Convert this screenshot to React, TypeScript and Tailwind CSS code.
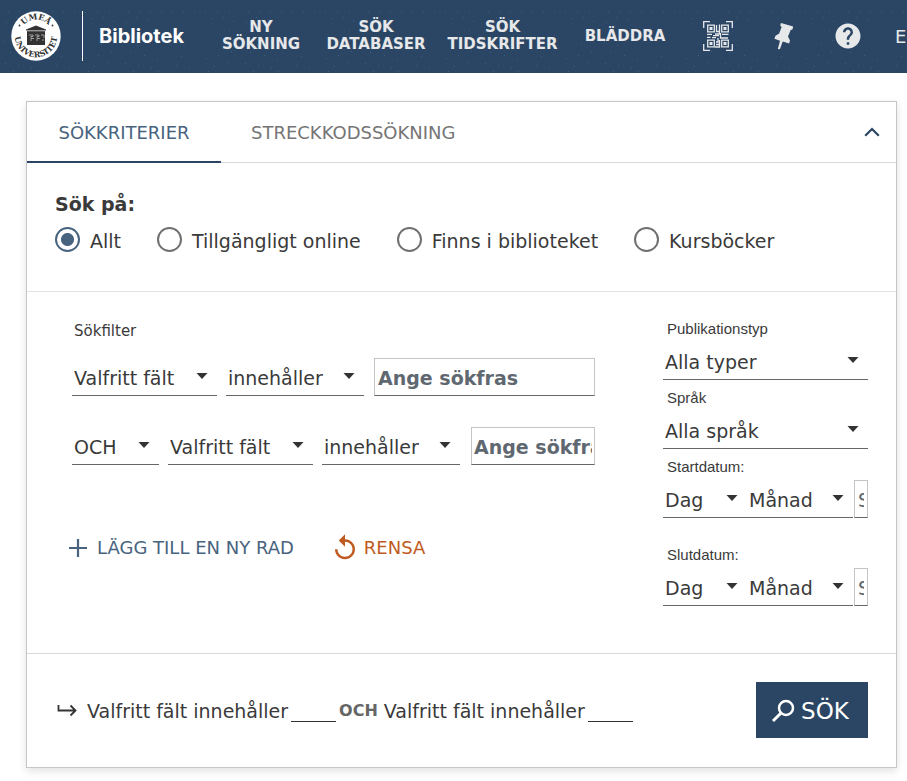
import type { ReactNode } from "react";
import { MdHelp, MdReplay } from "react-icons/md";

const dots: [number, number][] = [
  [8, 12], [19, 11], [30, 11], [41, 12], [52, 11], [63, 12], [74, 11], [85, 12], [97, 11], [109, 12],
  [6, 22], [16, 17], [28, 19], [91, 18], [103, 17], [113, 21],
  [12, 31], [109, 30], [4, 41], [17, 45], [101, 44], [112, 40],
  [10, 52], [24, 55], [37, 59], [61, 56], [86, 58], [98, 55], [111, 51],
  [5, 63], [18, 65], [31, 68], [56, 65], [69, 68], [94, 66], [107, 62],
  [13, 71], [38, 71], [88, 71],
];

function DotTexture({ id }: { id: string }) {
  return (
    <svg className="pointer-events-none absolute inset-0 h-full w-full" aria-hidden="true">
      <defs>
        <pattern id={id} width="120" height="74" patternUnits="userSpaceOnUse">
          {dots.map(([x, y]) => (
            <rect key={`${x}-${y}`} x={x} y={y} width="1" height="1" fill="#3b5e80" />
          ))}
        </pattern>
      </defs>
      <rect width="100%" height="100%" fill={`url(#${id})`} />
    </svg>
  );
}

function Seal() {
  return (
    <svg viewBox="0 0 50 50" className="size-[50px] shrink-0" role="img" aria-label="Umeå universitet">
      <circle cx="25" cy="25" r="24.7" fill="#fff" />
      <defs>
        <path id="seal-top" d="M8.5 25a16.5 16.5 0 0 1 33 0" />
        <path id="seal-bottom" d="M5.1 17.8a21.2 21.2 0 1 0 39.8 0" />
      </defs>
      <g fill="#333" className="font-['DejaVu_Serif',serif] text-[8px] font-bold">
        <text textAnchor="middle">
          <textPath href="#seal-top" startOffset="50%">UMEÅ</textPath>
        </text>
        <text textAnchor="middle">
          <textPath href="#seal-bottom" startOffset="50%">UNIVERSITET</textPath>
        </text>
      </g>
      <circle cx="8.500" cy="14.500" r="0.9" fill="#333" />
      <circle cx="41.500" cy="14.500" r="0.9" fill="#333" />
      <path d="M15 19.500v-1l10-4 10 4v1z" fill="#333" />
      <path d="M16 20.200h18V34H16z" fill="#333" />
      <path
        d="M18 24h4v1.500h-2v2h3M24 24h4v1.500h-2v2h3M30 24h3v3M19 29h2M25 29h2M31 29h2"
        fill="none"
        stroke="#bbb"
        strokeWidth="0.8"
      />
    </svg>
  );
}

function QrIcon() {
  return (
    <svg viewBox="0 0 30 30" className="size-[30px]" fill="none" stroke="currentColor" strokeWidth="1.300" aria-hidden="true">
      <path d="M.7 7V.7H7M23 .7h6.300V7M29.300 23v6.300H23M7 29.300H.7V23" />
      <path d="M4.700 4.200h6.600v6.600H4.700zM18.700 4.200h6.600v6.600h-6.600zM4.700 19.200h6.600v6.600H4.700zM18.700 19.200h6.600v6.600h-6.600z" />
      <path d="M6.500 6h3v3h-3zM20.500 6h3v3h-3zM6.500 21h3v3h-3zM20.500 21h3v3h-3z" fill="currentColor" stroke="none" />
      <path d="M13.500 4v6.500h3V3.500M16.500 8v5H12M4 13.400h5M10 14.600h6M19 13.400h6.500M4 16.300h3.500M9 16.600h4M17.500 12v5H25M15 17v4h-2M16.500 19v7H12M13 23.500h3" />
    </svg>
  );
}

function PinIcon() {
  return (
    <svg viewBox="0 0 22 28" className="h-7 w-[22px]" fill="currentColor" aria-hidden="true">
      <path d="M8 .9 20.200 4.600 19.400 7.400 17.700 7.900 15 14.500 17 18.600 16.100 21.400 9.700 19.500 6.900 27.300 4.800 26.900 7 18.700 1.400 16.800 2.500 13.700 6.200 11.600 8.600 5 7.200 3.500z" />
    </svg>
  );
}

function Select({ label, id, value, className }: { label?: string; id?: string; value: string; className: string }) {
  return (
    <div className={`relative h-[38px] shrink-0 ${className}`}>
      <select
        id={id}
        aria-label={label}
        className="h-full w-full appearance-none rounded-none border-b border-[#666] bg-transparent pt-[3px] pr-6 pl-0.5 text-[19px] text-[#3a3a3a]"
      >
        <option>{value}</option>
      </select>
      <svg viewBox="0 0 12 6" className="pointer-events-none absolute top-[15px] right-[9px] h-[6px] w-3" aria-hidden="true">
        <path d="M.5 0h11L6 6z" fill="#333" />
      </svg>
    </div>
  );
}

const inputStyle =
  "h-[38px] min-w-0 flex-1 rounded-none border border-[#c4c4c4] border-b-[#666] pt-0.5 text-[19px] placeholder:text-[#5f6870] placeholder:opacity-100";

function Field({ label, id, children }: { label: string; id: string; children: ReactNode }) {
  return (
    <div className="flex flex-col gap-[3px]">
      <label htmlFor={id} className="pl-1 font-['Liberation_Sans',Arial,sans-serif] text-[15px] leading-5">
        {label}
      </label>
      {children}
    </div>
  );
}

function DateField({ label, id, year }: { label: string; id: string; year: string }) {
  return (
    <Field label={label} id={id}>
      <div className="flex">
        <Select id={id} value="Dag" className="w-[84px]" />
        <Select label={`${label} månad`} value="Månad" className="w-[106px]" />
        <input aria-label={`${label} år`} placeholder={year} className={`${inputStyle} ml-px px-[3px]`} />
      </div>
    </Field>
  );
}

function Clause() {
  return (
    <>
      <span className="pt-0.5">Valfritt fält innehåller</span>
      <span className="mr-[3px] ml-[3px] h-6 w-[45px] border-b border-[#333]" />
    </>
  );
}

const links = [
  { text: "Ny sökning", width: "w-[112px]" },
  { text: "Sök databaser", width: "w-[118px]" },
  { text: "Sök tidskrifter", width: "w-[135px]" },
  { text: "Bläddra", width: "w-[110px]" },
];

const scopes = ["Allt", "Tillgängligt online", "Finns i biblioteket", "Kursböcker"];

export default function App() {
  return (
    <div className="overflow-x-hidden bg-white font-['DejaVu_Sans',Verdana,sans-serif] text-[19px] text-[#3a3a3a]">
      <header className="relative h-[73px] overflow-hidden bg-[#2b4664] text-[#e6e8ea]">
        <DotTexture id="header-dots" />
        <div className="relative flex h-[72px] items-center pl-[11px]">
          <Seal />
          <a
            href="#"
            className="ml-[21px] flex h-[50px] w-[123px] shrink-0 items-center border-l border-white pl-4 font-[Inter,sans-serif] text-[20px] font-bold text-white"
          >
            Bibliotek
          </a>
          <nav className="flex shrink-0 items-center">
            {links.map((link) => (
              <a
                key={link.text}
                href="#"
                className={`${link.width} px-1 text-center text-[15px] leading-[17px] font-bold uppercase`}
              >
                {link.text.split(" ").map((word) => (
                  <span key={word} className="block">
                    {word}
                  </span>
                ))}
              </a>
            ))}
          </nav>
          <div className="ml-[23px] flex shrink-0 items-center">
            <button aria-label="Skanna QR-kod">
              <QrIcon />
            </button>
            <button aria-label="Mina favoriter" className="ml-10">
              <PinIcon />
            </button>
            <button aria-label="Hjälp" className="ml-[38px]">
              <MdHelp className="size-[30px]" />
            </button>
            <button aria-label="Språkval" className="ml-8 text-[18px]">
              E
            </button>
          </div>
        </div>
      </header>

      <main className="pt-7 pr-[10px] pb-3 pl-[26px]">
        <form
          className="border border-[#c6c6c6] shadow-[0_3px_8px_rgba(0,0,0,0.12)]"
          onSubmit={(event) => event.preventDefault()}
        >
          <div className="flex h-[61px] border-b border-[#d8d8d8] text-[18px]">
            <button type="button" className="-mb-px w-[194px] border-b-2 border-[#2b4664] pt-0.5 text-[#48637e]">
              SÖKKRITERIER
            </button>
            <button type="button" className="px-[30px] text-[#757575]">
              STRECKKODSSÖKNING
            </button>
            <button type="button" aria-label="Dölj sökformulär" className="mr-4 ml-auto">
              <svg viewBox="0 0 16 10" className="h-[10px] w-4" fill="none" stroke="#2b4664" strokeWidth="2.200" aria-hidden="true">
                <path d="M1.200 8.700 8 2l6.800 6.700" />
              </svg>
            </button>
          </div>

          <fieldset className="border-b border-[#e2e2e2] px-7 pt-[27px] pb-9">
            <legend className="float-left w-full leading-7 font-bold">Sök på:</legend>
            <div className="clear-both flex items-center gap-9 pt-1.5 leading-7">
              {scopes.map((scope, index) => (
                <label key={scope} className="flex items-center gap-[10px] whitespace-nowrap">
                  <input
                    type="radio"
                    name="scope"
                    defaultChecked={index === 0}
                    className="size-[25px] shrink-0 appearance-none rounded-full border-2 border-[#707070] checked:border-[#48637e] checked:bg-[radial-gradient(circle,#48637e_6px,transparent_7px)]"
                  />
                  <span className="pt-[3px]">{scope}</span>
                </label>
              ))}
            </div>
          </fieldset>

          <div className="flex border-b border-[#d8d8d8] pt-[27px] pr-7 pb-[47px] pl-[45px]">
            <div className="mr-[68px] min-w-0 flex-1">
              <div className="pt-px pl-0.5 text-[15px] leading-[22px]">Sökfilter</div>
              <div className="mt-4 flex gap-[9px]">
                <Select label="Fält" value="Valfritt fält" className="w-[145px]" />
                <Select label="Villkor" value="innehåller" className="w-[138px]" />
                <input aria-label="Sökfras" placeholder="Ange sökfras" className={`${inputStyle} ml-px px-[3px] font-bold`} />
              </div>
              <div className="mt-[31px] flex gap-[9px]">
                <Select label="Operator" value="OCH" className="w-[87px]" />
                <Select label="Fält rad 2" value="Valfritt fält" className="w-[145px]" />
                <Select label="Villkor rad 2" value="innehåller" className="w-[138px]" />
                <input aria-label="Sökfras rad 2" placeholder="Ange sökfras" className={`${inputStyle} ml-0.5 px-0.5 font-bold`} />
              </div>
              <div className="mt-[68px] -ml-1 flex items-center gap-9 text-[18px] leading-7">
                <button type="button" className="flex items-center gap-[9px] whitespace-nowrap text-[#48637e]">
                  <svg viewBox="0 0 20 20" className="size-5" stroke="currentColor" strokeWidth="2.200" aria-hidden="true">
                    <path d="M10 1v18M1 10h18" />
                  </svg>
                  LÄGG TILL EN NY RAD
                </button>
                <button type="button" className="flex items-center gap-1 text-[#bf5a21]">
                  <MdReplay className="size-[30px]" />
                  RENSA
                </button>
              </div>
            </div>
            <div className="flex w-[205px] shrink-0 flex-col gap-2">
              <Field label="Publikationstyp" id="type">
                <Select id="type" value="Alla typer" className="w-full" />
              </Field>
              <Field label="Språk" id="language">
                <Select id="language" value="Alla språk" className="w-full" />
              </Field>
              <DateField label="Startdatum:" id="start" year="Startår" />
              <div className="mt-[19px]">
                <DateField label="Slutdatum:" id="end" year="Slutår" />
              </div>
            </div>
          </div>

          <div className="flex items-center px-7 pt-7 pb-[29px]">
            <svg viewBox="0 0 20 14" className="mr-[10px] ml-0.5 h-[14px] w-5 shrink-0" fill="none" stroke="#333" strokeWidth="1.800" aria-hidden="true">
              <path d="M1.500 2v5.500h16M13.500 2.500l5 5-5 5" />
            </svg>
            <div className="flex items-center leading-7 whitespace-nowrap">
              <Clause />
              <span className="mr-1.5 pt-0.5 text-[16px] font-bold text-[#666]">OCH</span>
              <Clause />
            </div>
            <button
              type="submit"
              className="relative ml-auto flex h-14 w-28 shrink-0 items-center justify-center gap-1.5 bg-[#2b4664] pt-0.5 pr-1 text-[23px] text-white"
            >
              <svg viewBox="0 0 24 24" className="size-6" fill="none" stroke="currentColor" strokeWidth="2.500" aria-hidden="true">
                <circle cx="15" cy="9" r="7" />
                <path d="M10 14 2 22" strokeWidth="3" />
              </svg>
              SÖK
            </button>
          </div>
        </form>
      </main>
    </div>
  );
}
